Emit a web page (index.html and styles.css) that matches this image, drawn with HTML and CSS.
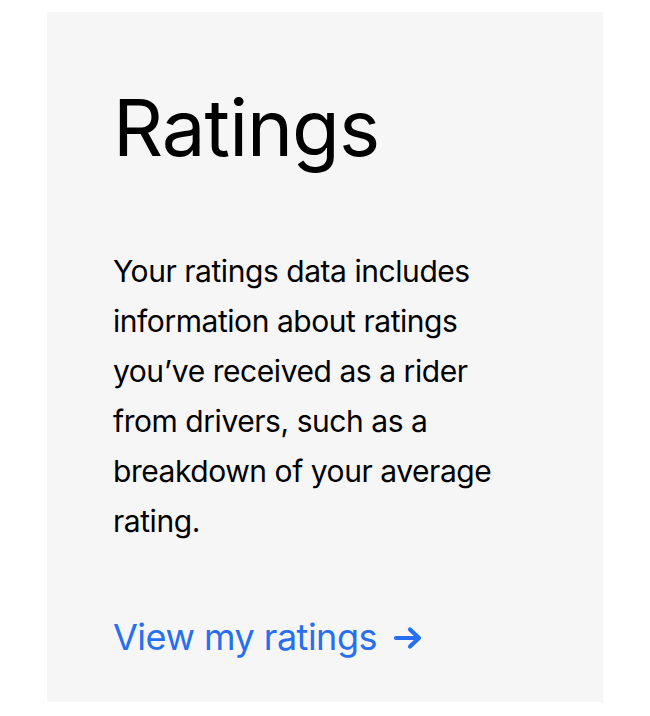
FILE: index.html
```html
<!DOCTYPE html>
<html lang="en">

<head>
    <meta charset="UTF-8">
    <meta name="viewport" content="width=device-width, initial-scale=1.0">
    <title>Ratings</title>

    <link rel="stylesheet" href="styles.css">
</head>

<body>

    <div class="card">
        <h1 class="card-title">Ratings</h1>
        <p class="card-text">Your ratings data includes information about ratings you’ve received as a rider from drivers, such as a breakdown of your average rating.</p>
        <a href="#" class="card-link">
            View my ratings
            <svg class="arrow" width="30" height="24" viewBox="0 0 30 24" aria-hidden="true">
                <path d="M3 12 H26 M17 3.5 L26 12 L17 20.5" fill="none" stroke="currentColor" stroke-width="4.2" stroke-linecap="round" stroke-linejoin="round" />
            </svg>
        </a>
    </div>

</body>

</html>
```

FILE: styles.css
```css
body {
    font-family: Inter, "Noto Sans", sans-serif;
    background-color: #fff;
    margin: 0;
    padding: 12px 47px 14px 47px;
}

.card {
    background-color: #f6f6f6;
    height: 690px;
    box-sizing: border-box;
    padding: 71px 66px 0 66px;
    display: flex;
    flex-direction: column;
    align-items: flex-start;
}

.card-title {
    font-size: 78px;
    font-weight: 400;
    line-height: 90px;
    letter-spacing: -1px;
    color: #000;
    margin: 0 0 73px 0;
}

.card-text {
    max-width: 400px;
    font-size: 30px;
    line-height: 50px;
    letter-spacing: -0.45px;
    color: #000;
    margin: 0 0 69px 0;
}

.card-link {
    display: flex;
    align-items: center;
    gap: 16px;
    font-size: 36px;
    line-height: 44px;
    letter-spacing: -0.5px;
    color: #276ef1;
    text-decoration: none;
}

.arrow {
    display: block;
    margin-top: 2px;
}
```
